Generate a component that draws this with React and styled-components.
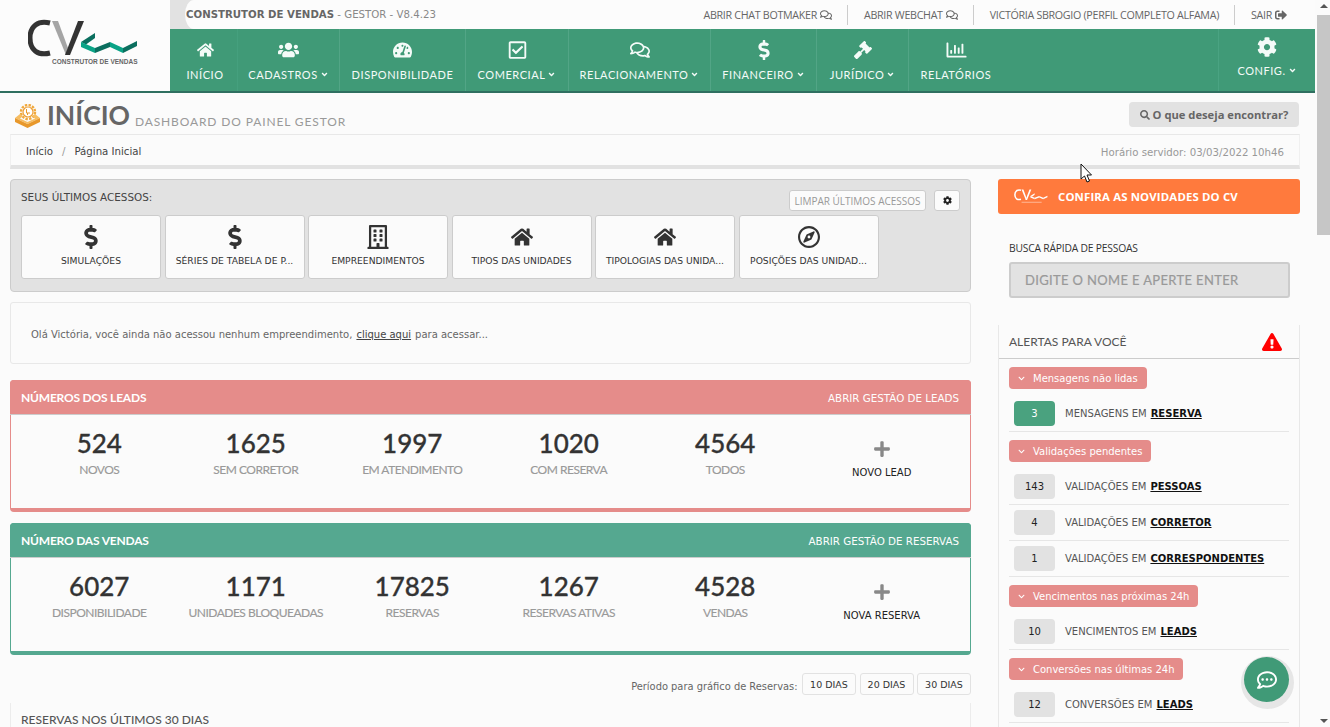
import React from 'react'
import styled, { createGlobalStyle } from 'styled-components'
import {
  FaHome, FaUsers, FaTachometerAlt, FaRegCheckSquare, FaRegComments, FaDollarSign, FaGavel,
  FaRegChartBar, FaCog, FaSignOutAlt, FaSearch, FaAngleDown, FaChevronDown, FaPlus,
  FaExclamationTriangle, FaRegBuilding, FaRegCompass, FaRegCommentDots,
} from 'react-icons/fa'

const GlobalStyle = createGlobalStyle`
  html, body { margin: 0; padding: 0; height: 100%; overflow: hidden; }
  body {
    background: #fbfbfb;
    color: #444;
    font-family: "DejaVu Sans", Verdana, sans-serif;
    font-size: 10px;
  }
  * { box-sizing: border-box; }
`

const Shell = styled.div`
  display: flex;
  height: 727px;
  position: relative;
`

const Page = styled.div`
  flex: 1;
  min-width: 0;
  overflow: hidden;
`

const ScrollTrack = styled.div`
  width: 13px;
  flex: none;
  background: #fbfbfb;
  display: flex;
  flex-direction: column;
  align-items: center;
`

const ScrollArrow = styled.span`
  width: 0;
  height: 0;
  margin-top: ${p => (p.$down ? 'auto' : '4px')};
  margin-bottom: ${p => (p.$down ? '4px' : '0')};
  border-left: 4px solid transparent;
  border-right: 4px solid transparent;
  border-bottom: ${p => (p.$down ? '0' : '4px solid #555')};
  border-top: ${p => (p.$down ? '4px solid #555' : '0')};
`

const ScrollThumb = styled.div`
  width: 100%;
  height: 220px;
  margin-top: 7px;
  background: #c6c6c6;
`

const Header = styled.header`
  display: flex;
  height: 93px;
  margin-right: 2px;
  border-bottom: 2px solid #2f6f60;
`

const LogoBox = styled.div`
  width: 170px;
  flex: none;
  padding: 19px 0 0 28px;
  background: #fcfcfc;
  display: flex;
  flex-direction: column;
`

const LogoSub = styled.span`
  font-family: "Liberation Sans", sans-serif;
  font-size: 6.5px;
  font-weight: 700;
  color: #666;
  margin: 1px 0 0 24px;
  white-space: nowrap;
`

const HeadRight = styled.div`
  flex: 1;
  display: flex;
  flex-direction: column;
  min-width: 0;
`

const TopStrip = styled.div`
  height: 29px;
  background: #e2e2e2;
  padding-left: 15px;
`

const TopInner = styled.div`
  height: 100%;
  display: flex;
  align-items: center;
  justify-content: space-between;
  background: #fcfcfc;
  border-radius: 9px 0 0 9px / 15px;
  padding: 0 28px 0 1px;
`

const Version = styled.div`
  font-size: 10.2px;
  color: #888;
  white-space: nowrap;
  b { color: #666; }
`

const TopLinks = styled.div`
  display: flex;
  align-items: center;
`

const TopLink = styled.a`
  font-family: "Open Sans", sans-serif;
  font-size: 10.7px;
  letter-spacing: -0.3px;
  color: #666;
  height: 20px;
  display: flex;
  align-items: center;
  gap: 3px;
  padding: 0 15px 0 16px;
  white-space: nowrap;
  border-left: ${p => (p.$first ? 'none' : '1px solid #ccc')};
  &:last-child { padding-right: 0; }
  svg { font-size: 12px; }
`

const NavBar = styled.nav`
  flex: 1;
  display: flex;
  background: #409a77;
`

const NavItem = styled.a`
  width: ${p => p.$w}px;
  flex: none;
  display: flex;
  flex-direction: column;
  align-items: center;
  color: #f4fbf8;
  border-right: 1px solid ${p => (p.$last ? 'transparent' : '#52a586')};
  padding-top: 11px;
  font-family: "Lato", sans-serif;
  font-size: 11px;
  letter-spacing: 0.55px;
  white-space: nowrap;
  &:first-child { border-right-color: #45a07e; padding-left: 3px; }
  svg.main { font-size: ${p => p.$icon || 18}px; height: 20px; }
`

const NavLabel = styled.span`
  margin-top: 8px;
  display: flex;
  align-items: center;
  gap: 2px;
  svg { font-size: 9px; }
`

const ConfigItem = styled(NavItem)`
  margin-left: auto;
  border-right: none;
  border-left: 1px solid #4aa382;
  padding-top: 8px;
  svg.main { font-size: 20px; }
  ${NavLabel} { margin-top: 7px; }
`

const Content = styled.div`
  padding: 0 17px 0 10px;
`

const TitleRow = styled.div`
  display: flex;
  align-items: flex-end;
  height: 41px;
  padding: 0 1px 5px 5px;
`

const TitleIcon = styled.svg`
  flex: none;
  margin-bottom: 1px;
`

const PageTitle = styled.h1`
  margin: 0 5px -1px 7px;
  font-family: "Lato", sans-serif;
  font-weight: 700;
  font-size: 26.5px;
  line-height: 30px;
  color: #666;
`

const SubTitle = styled.span`
  font-family: "Lato", sans-serif;
  font-size: 12px;
  letter-spacing: 0.87px;
  color: #999;
  line-height: 16px;
  margin-bottom: -1px;
`

const FindButton = styled.button`
  margin-left: auto;
  margin-bottom: 2px;
  width: 170px;
  height: 25px;
  border: 0;
  border-radius: 4px;
  background: #e2e2e2;
  color: #666;
  font-family: "Open Sans", sans-serif;
  font-weight: 700;
  font-size: 11.2px;
  display: flex;
  align-items: center;
  justify-content: center;
  gap: 3px;
  padding: 0;
  svg { font-size: 10px; }
`

const Breadcrumb = styled.div`
  height: 35px;
  display: flex;
  align-items: center;
  justify-content: space-between;
  padding: 2px 15px 0;
  border: 1px solid #f0f0f0;
  border-top: 1px solid #e8e8e8;
  border-bottom: 4px solid #e2e2e2;
  color: #444;
  font-size: 10.2px;
  span.sep { color: #999; margin: 0 9px; }
`

const ServerTime = styled.span`
  color: #999;
  font-size: 10.2px;
  margin-top: 2px;
`

const Columns = styled.div`
  display: grid;
  grid-template-columns: 961px 302px;
  column-gap: 27px;
  margin-top: 10px;
`

const Stack = styled.div`
  display: flex;
  flex-direction: column;
  min-width: 0;
`

const RecentPanel = styled.section`
  height: 113px;
  background: #e2e2e2;
  border: 1px solid #ccc;
  border-radius: 4px;
  padding: 10px;
`

const RecentTop = styled.div`
  display: flex;
  align-items: flex-start;
  height: 25px;
`

const RecentTitle = styled.span`
  margin-top: 1px;
  color: #444;
  font-size: 10.4px;
`

const ClearButton = styled.button`
  margin-left: auto;
  width: 137px;
  height: 21px;
  background: #fbfbfb;
  border: 1px solid #ccc;
  border-radius: 3px;
  color: #999;
  font-family: "Open Sans", sans-serif;
  font-size: 10px;
  padding: 0;
`

const GearButton = styled.button`
  margin-left: 8px;
  width: 26px;
  height: 21px;
  background: #fbfbfb;
  border: 1px solid #ccc;
  border-radius: 3px;
  color: #222;
  display: flex;
  align-items: center;
  justify-content: center;
  padding: 0;
  font-size: 9px;
`

const RecentCards = styled.div`
  display: flex;
  gap: 3.5px;
`

const RecentCard = styled.a`
  width: 140px;
  height: 64px;
  background: #fbfbfb;
  border: 1px solid #ccc;
  border-radius: 3px;
  padding: 9px 6px 0;
  display: flex;
  flex-direction: column;
  align-items: center;
  color: #333;
  svg { font-size: 22px; height: 24px; }
`

const RecentLabel = styled.span`
  margin-top: 6px;
  font-size: 9.2px;
  color: #333;
  white-space: nowrap;
`

const HelloBox = styled.div`
  height: 62px;
  margin-top: 10px;
  display: flex;
  align-items: center;
  padding: 2px 0 0 20px;
  border: 1px solid #e8e8e8;
  border-radius: 3px;
  color: #666;
  font-size: 10px;
  a { color: #444; text-decoration: underline; margin: 0 4px; }
`

const NumberCard = styled.section`
  height: 132px;
  margin-top: ${p => p.$gap}px;
  border: 1px solid ${p => p.$color};
  border-bottom-width: 4px;
  border-radius: 4px;
`

const CardHead = styled.div`
  height: 35px;
  margin: -1px -1px 0;
  padding: 0 12px 0 11px;
  background: ${p => p.$color};
  border-bottom: 1px solid #ccc;
  border-radius: 4px 4px 0 0;
  display: flex;
  align-items: center;
  justify-content: space-between;
  color: #fff;
`

const CardTitle = styled.span`
  font-family: "Lato", sans-serif;
  font-weight: 700;
  font-size: 12px;
  letter-spacing: -0.2px;
`

const CardLink = styled.a`
  font-size: 10.3px;
  color: #fdfdfd;
  margin-top: 1px;
`

const StatGrid = styled.div`
  display: grid;
  grid-template-columns: repeat(6, 1fr);
  padding: 13px 10px 0;
`

const Stat = styled.div`
  display: flex;
  flex-direction: column;
  align-items: center;
  font-family: "Lato", sans-serif;
`

const StatValue = styled.span`
  font-size: 26px;
  line-height: 30px;
  font-weight: 500;
  color: #333;
  -webkit-text-stroke: 0.3px #333;
`

const StatLabel = styled.span`
  margin-top: 4px;
  font-size: 12px;
  letter-spacing: -0.5px;
  color: #999;
  -webkit-text-stroke: 0.15px #999;
`

const AddStat = styled(Stat)`
  padding-top: 12px;
  color: #888;
  svg { font-size: 18px; }
`

const AddLabel = styled.span`
  margin-top: 9px;
  font-family: "DejaVu Sans", sans-serif;
  font-size: 10px;
  color: #222;
`

const PeriodRow = styled.div`
  margin-top: 18px;
  height: 22px;
  display: flex;
  justify-content: flex-end;
  align-items: center;
  gap: 3.5px;
  color: #666;
`

const PeriodLabel = styled.span`
  margin-right: 1px;
  margin-top: 4px;
  font-size: 9.9px;
`

const PeriodButton = styled.button`
  width: 54px;
  height: 22px;
  background: #fbfbfb;
  border: 1px solid #e2e2e2;
  border-radius: 3px;
  color: #333;
  font-family: "DejaVu Sans", sans-serif;
  font-size: 9.5px;
  padding: 0;
`

const ChartPanel = styled.section`
  margin-top: 8px;
  height: 60px;
  border: 1px solid #ececec;
  border-width: 0 1px;
  padding: 9px 10px;
`

const ChartTitle = styled.span`
  font-family: "Lato", sans-serif;
  font-weight: 500;
  font-size: 12px;
  color: #555;
`

const NewsButton = styled.a`
  height: 35px;
  background: #ff7a3d;
  border-radius: 3px;
  display: flex;
  align-items: center;
  padding: 0 0 1px 16px;
  color: #fff;
  font-family: "Open Sans", sans-serif;
  font-weight: 700;
  font-size: 11.4px;
  letter-spacing: 0.15px;
  gap: 10px;
`

const QuickSearch = styled.div`
  margin-top: 27px;
  padding: 0 10px 0 11px;
`

const QuickLabel = styled.label`
  display: block;
  font-family: "Open Sans", sans-serif;
  font-size: 10.3px;
  letter-spacing: -0.2px;
  color: #333;
`

const QuickInput = styled.div`
  margin-top: 7px;
  height: 36px;
  background: #e2e2e2;
  border: 2px solid #ccc;
  border-radius: 3px;
  display: flex;
  align-items: center;
  padding-left: 14px;
  color: #999;
  font-family: "Lato", sans-serif;
  font-size: 13px;
  letter-spacing: 0.35px;
  -webkit-text-stroke: 0.2px #999;
`

const AlertPanel = styled.section`
  margin-top: 27px;
  border: 1px solid #e8e8e8;
  border-width: 0 1px;
`

const AlertHead = styled.div`
  height: 34px;
  padding: 0 17px 0 10px;
  border-bottom: 1px solid #ccc;
  display: flex;
  align-items: center;
  justify-content: space-between;
  font-family: "Lato", sans-serif;
  font-size: 12px;
  color: #555;
  svg { color: #f00; font-size: 20px; }
`

const AlertBody = styled.div`
  padding: 8px 10px 0;
`

const AlertPill = styled.div`
  width: fit-content;
  height: 22px;
  margin-bottom: 12px;
  padding: 0 9px;
  background: #e58c8a;
  border-radius: 4px;
  color: #fff;
  display: flex;
  align-items: center;
  gap: 8px;
  font-size: 10px;
  svg { font-size: 7px; }
`

const AlertGroup = styled.div`
  margin-bottom: 8px;
`

const AlertRow = styled.div`
  padding: ${p => (p.$first ? '0' : '5px')} 0 0 5px;
  height: ${p => (p.$first ? '31px' : '36px')};
  border-bottom: 1px solid #e6e6e6;
  display: flex;
  align-items: flex-start;
  font-size: 10px;
  color: #555;
  a { color: #111; font-weight: 700; text-decoration: underline; margin-left: 4px; }
`

const Badge = styled.span`
  width: 41px;
  height: 25px;
  flex: none;
  margin-right: 10px;
  border-radius: 4px;
  background: ${p => (p.$green ? '#4aa27f' : '#e2e2e2')};
  color: ${p => (p.$green ? '#fff' : '#222')};
  display: flex;
  align-items: center;
  justify-content: center;
  font-size: 10px;
`

const RowText = styled.span`
  line-height: 25px;
`

const ChatBubble = styled.button`
  position: absolute;
  left: 1244px;
  top: 657px;
  width: 45px;
  height: 45px;
  border: 0;
  border-radius: 50%;
  background: #409a77;
  color: #fff;
  box-shadow: 1px 3px 0 4px #e6e6e6;
  display: flex;
  align-items: center;
  justify-content: center;
  font-size: 20px;
  padding: 0;
`

const Pointer = styled.svg`
  position: absolute;
  left: 1080px;
  top: 163px;
`

const navItems = [
  { w: 68, label: 'INÍCIO', icon: FaHome, size: 17 },
  { w: 102, label: 'CADASTROS', icon: FaUsers, size: 21, menu: true },
  { w: 126, label: 'DISPONIBILIDADE', icon: FaTachometerAlt, size: 19 },
  { w: 103, label: 'COMERCIAL', icon: FaRegCheckSquare, size: 19, menu: true },
  { w: 142, label: 'RELACIONAMENTO', icon: FaRegComments, size: 20, menu: true },
  { w: 106, label: 'FINANCEIRO', icon: FaDollarSign, size: 20, menu: true },
  { w: 92, label: 'JURÍDICO', icon: FaGavel, size: 18, menu: true },
  { w: 95, label: 'RELATÓRIOS', icon: FaRegChartBar, size: 21, last: true },
]

const recents = [
  { label: 'SIMULAÇÕES', icon: FaDollarSign },
  { label: 'SÉRIES DE TABELA DE P...', icon: FaDollarSign },
  { label: 'EMPREENDIMENTOS', icon: FaRegBuilding },
  { label: 'TIPOS DAS UNIDADES', icon: FaHome },
  { label: 'TIPOLOGIAS DAS UNIDA...', icon: FaHome },
  { label: 'POSIÇÕES DAS UNIDAD...', icon: FaRegCompass },
]

const leads = [
  ['524', 'NOVOS'], ['1625', 'SEM CORRETOR'], ['1997', 'EM ATENDIMENTO'], ['1020', 'COM RESERVA'], ['4564', 'TODOS'],
]

const sales = [
  ['6027', 'DISPONIBILIDADE'], ['1171', 'UNIDADES BLOQUEADAS'], ['17825', 'RESERVAS'], ['1267', 'RESERVAS ATIVAS'], ['4528', 'VENDAS'],
]

const alerts = [
  { title: 'Mensagens não lidas', rows: [['3', 'MENSAGENS EM', 'RESERVA', true]] },
  {
    title: 'Validações pendentes',
    rows: [['143', 'VALIDAÇÕES EM', 'PESSOAS'], ['4', 'VALIDAÇÕES EM', 'CORRETOR'], ['1', 'VALIDAÇÕES EM', 'CORRESPONDENTES']],
  },
  { title: 'Vencimentos nas próximas 24h', rows: [['10', 'VENCIMENTOS EM', 'LEADS']] },
  { title: 'Conversões nas últimas 24h', rows: [['12', 'CONVERSÕES EM', 'LEADS']] },
]

function CvLogo({ width = 110, height = 38, light }) {
  const dark = light ? '#fff' : '#333'
  const grey = light ? '#fff' : '#a5a5a5'
  const teal = light ? '#fff' : '#0aa386'
  const deep = light ? '#fff' : '#0b6f5f'
  return (
    <svg width={width} height={height} viewBox={light ? '0 0 110 46' : '0 0 110 38'}>
      <path d="M22 4 C10 1 2 7 2 19 C2 31 10 37 22 34" fill="none" stroke={dark} strokeWidth="5" />
      <path d="M24 2 L30 2 L40 29 L38 36 Z" fill={grey} />
      <path d="M37 36 L50 2 L56 2 L42 36 Z" fill={dark} />
      <path d="M53 23 L67 14 V19 L58 25.5 Z" fill={deep} />
      <path d="M53 23 L67 29 V34 L53 28 Z" fill={teal} />
      <path d="M67 29 L82 23 V28 L67 34 Z" fill={deep} />
      <path d="M82 23 L95 29 V34 L82 28 Z" fill={teal} />
      <path d="M95 29 L109 22 V27 L95 34 Z" fill={deep} />
      {light && <rect x="24" y="42" width="66" height="3" fill="#fff" opacity="0.5" />}
    </svg>
  )
}

function StatList({ items }) {
  return items.map(([value, label]) => (
    <Stat key={label}>
      <StatValue>{value}</StatValue>
      <StatLabel>{label}</StatLabel>
    </Stat>
  ))
}

export default function App() {
  return (
    <Shell>
      <GlobalStyle />
      <Page>
        <Header>
          <LogoBox>
            <CvLogo />
            <LogoSub>CONSTRUTOR DE VENDAS</LogoSub>
          </LogoBox>
          <HeadRight>
            <TopStrip>
              <TopInner>
                <Version><b>CONSTRUTOR DE VENDAS</b> - GESTOR - V8.4.23</Version>
                <TopLinks>
                  <TopLink $first>ABRIR CHAT BOTMAKER <FaRegComments /></TopLink>
                  <TopLink>ABRIR WEBCHAT <FaRegComments /></TopLink>
                  <TopLink>VICTÓRIA SBROGIO (PERFIL COMPLETO ALFAMA)</TopLink>
                  <TopLink>SAIR <FaSignOutAlt /></TopLink>
                </TopLinks>
              </TopInner>
            </TopStrip>
            <NavBar>
              {navItems.map(({ w, label, icon: Icon, size, menu, last }) => (
                <NavItem key={label} $w={w} $icon={size} $last={last}>
                  <Icon className="main" />
                  <NavLabel>{label}{menu && <FaAngleDown />}</NavLabel>
                </NavItem>
              ))}
              <ConfigItem $w={97}>
                <FaCog className="main" />
                <NavLabel>CONFIG.<FaAngleDown /></NavLabel>
              </ConfigItem>
            </NavBar>
          </HeadRight>
        </Header>

        <Content>
          <TitleRow>
            <TitleIcon width="25" height="24" viewBox="0 0 25 24">
              <circle cx="13" cy="8" r="7" fill="none" stroke="#f0a83c" strokeWidth="2.4" strokeDasharray="2.4 1.3" />
              <circle cx="13" cy="8" r="5" fill="#fff" stroke="#ee9f35" strokeWidth="1.2" />
              <path d="M11.5 5 V9 H15 M12.5 9 V11" fill="none" stroke="#e89a2e" strokeWidth="1" />
              <path d="M0 14 L5 10 L8 12 L5 14.5 L12.5 18 L20 14.5 L17 12 L20 10 L25 14 L12.5 20 Z" fill="#f6bd62" />
              <path d="M0 14 L12.5 20 L25 14 V18 L12.5 24 L0 18 Z" fill="#e8982b" />
            </TitleIcon>
            <PageTitle>INÍCIO</PageTitle>
            <SubTitle>DASHBOARD DO PAINEL GESTOR</SubTitle>
            <FindButton><FaSearch /> O que deseja encontrar?</FindButton>
          </TitleRow>

          <Breadcrumb>
            <span>Início<span className="sep">/</span>Página Inicial</span>
            <ServerTime>Horário servidor: 03/03/2022 10h46</ServerTime>
          </Breadcrumb>

          <Columns>
            <Stack>
              <RecentPanel>
                <RecentTop>
                  <RecentTitle>SEUS ÚLTIMOS ACESSOS:</RecentTitle>
                  <ClearButton>LIMPAR ÚLTIMOS ACESSOS</ClearButton>
                  <GearButton><FaCog /></GearButton>
                </RecentTop>
                <RecentCards>
                  {recents.map(({ label, icon: Icon }) => (
                    <RecentCard key={label}>
                      <Icon />
                      <RecentLabel>{label}</RecentLabel>
                    </RecentCard>
                  ))}
                </RecentCards>
              </RecentPanel>

              <HelloBox>
                Olá Victória, você ainda não acessou nenhum empreendimento,<a>clique aqui</a>para acessar...
              </HelloBox>

              <NumberCard $color="#e58c8a" $gap={16}>
                <CardHead $color="#e58c8a">
                  <CardTitle>NÚMEROS DOS LEADS</CardTitle>
                  <CardLink>ABRIR GESTÃO DE LEADS</CardLink>
                </CardHead>
                <StatGrid>
                  <StatList items={leads} />
                  <AddStat>
                    <FaPlus />
                    <AddLabel>NOVO LEAD</AddLabel>
                  </AddStat>
                </StatGrid>
              </NumberCard>

              <NumberCard $color="#55a890" $gap={11}>
                <CardHead $color="#55a890">
                  <CardTitle>NÚMERO DAS VENDAS</CardTitle>
                  <CardLink>ABRIR GESTÃO DE RESERVAS</CardLink>
                </CardHead>
                <StatGrid>
                  <StatList items={sales} />
                  <AddStat>
                    <FaPlus />
                    <AddLabel>NOVA RESERVA</AddLabel>
                  </AddStat>
                </StatGrid>
              </NumberCard>

              <PeriodRow>
                <PeriodLabel>Período para gráfico de Reservas:</PeriodLabel>
                <PeriodButton>10 DIAS</PeriodButton>
                <PeriodButton>20 DIAS</PeriodButton>
                <PeriodButton>30 DIAS</PeriodButton>
              </PeriodRow>

              <ChartPanel>
                <ChartTitle>RESERVAS NOS ÚLTIMOS 30 DIAS</ChartTitle>
              </ChartPanel>
            </Stack>

            <Stack>
              <NewsButton>
                <CvLogo width={34} height={14} light />
                CONFIRA AS NOVIDADES DO CV
              </NewsButton>

              <QuickSearch>
                <QuickLabel>BUSCA RÁPIDA DE PESSOAS</QuickLabel>
                <QuickInput>DIGITE O NOME E APERTE ENTER</QuickInput>
              </QuickSearch>

              <AlertPanel>
                <AlertHead>
                  ALERTAS PARA VOCÊ
                  <FaExclamationTriangle />
                </AlertHead>
                <AlertBody>
                  {alerts.map(group => (
                    <AlertGroup key={group.title}>
                      <AlertPill><FaChevronDown />{group.title}</AlertPill>
                      {group.rows.map(([count, text, link, green], i) => (
                        <AlertRow key={link + text} $first={i === 0}>
                          <Badge $green={green}>{count}</Badge>
                          <RowText>{text}<a>{link}</a></RowText>
                        </AlertRow>
                      ))}
                    </AlertGroup>
                  ))}
                </AlertBody>
              </AlertPanel>
            </Stack>
          </Columns>
        </Content>
      </Page>
      <ScrollTrack>
        <ScrollArrow />
        <ScrollThumb />
        <ScrollArrow $down />
      </ScrollTrack>
      <ChatBubble><FaRegCommentDots /></ChatBubble>
      <Pointer width="13" height="21" viewBox="0 0 13 21">
        <path d="M1 1 V16 L4.5 13 L7 19 L9.5 18 L7 12 H11.5 Z" fill="#fff" stroke="#111" strokeWidth="1" />
      </Pointer>
    </Shell>
  )
}
